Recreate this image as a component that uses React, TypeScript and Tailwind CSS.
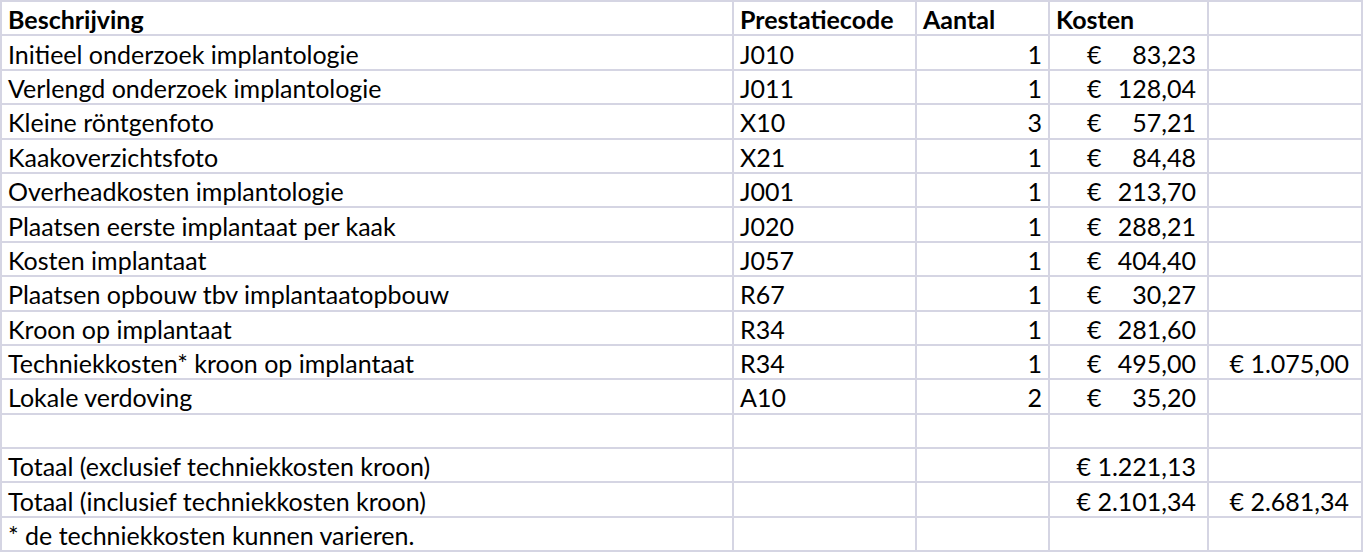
type Row = {
  desc: string;
  code: string;
  qty?: number;
  cost?: string;
  extra?: string;
};

const rows: Row[] = [
  { desc: "Initieel onderzoek implantologie", code: "J010", qty: 1, cost: "83,23" },
  { desc: "Verlengd onderzoek implantologie", code: "J011", qty: 1, cost: "128,04" },
  { desc: "Kleine röntgenfoto", code: "X10", qty: 3, cost: "57,21" },
  { desc: "Kaakoverzichtsfoto", code: "X21", qty: 1, cost: "84,48" },
  { desc: "Overheadkosten implantologie", code: "J001", qty: 1, cost: "213,70" },
  { desc: "Plaatsen eerste implantaat per kaak", code: "J020", qty: 1, cost: "288,21" },
  { desc: "Kosten implantaat", code: "J057", qty: 1, cost: "404,40" },
  { desc: "Plaatsen opbouw tbv implantaatopbouw", code: "R67", qty: 1, cost: "30,27" },
  { desc: "Kroon op implantaat", code: "R34", qty: 1, cost: "281,60" },
  { desc: "Techniekkosten* kroon op implantaat", code: "R34", qty: 1, cost: "495,00", extra: "€ 1.075,00" },
  { desc: "Lokale verdoving", code: "A10", qty: 2, cost: "35,20" },
];

const cell = "bg-white h-[32.4px] flex items-center px-[6px] pt-[3px] whitespace-nowrap";

export default function App() {
  return (
    <div
      className="w-[1363px] bg-white text-black text-[25px] leading-none"
      style={{ fontFamily: "Lato, 'Noto Sans', sans-serif" }}
    >
      <div className="grid grid-cols-[730px_181px_131px_157px_152px] gap-[2px] p-[2px] bg-[#d5d5e3]">
        <div className={`${cell} font-bold`}>Beschrijving</div>
        <div className={`${cell} font-bold`}>Prestatiecode</div>
        <div className={`${cell} font-bold`}>Aantal</div>
        <div className={`${cell} font-bold`}>Kosten</div>
        <div className={cell} />

        {rows.map((r, i) => (
          <RowCells key={i} row={r} />
        ))}

        <div className={cell} />
        <div className={cell} />
        <div className={cell} />
        <div className={cell} />
        <div className={cell} />

        <div className={cell}>Totaal (exclusief techniekkosten kroon)</div>
        <div className={cell} />
        <div className={cell} />
        <div className={`${cell} justify-end pr-[11px]`}>€ 1.221,13</div>
        <div className={cell} />

        <div className={cell}>Totaal (inclusief techniekkosten kroon)</div>
        <div className={cell} />
        <div className={cell} />
        <div className={`${cell} justify-end pr-[11px]`}>€ 2.101,34</div>
        <div className={`${cell} justify-end pr-[12px]`}>€ 2.681,34</div>

        <div className={cell}>* de techniekkosten kunnen varieren.</div>
        <div className={cell} />
        <div className={cell} />
        <div className={cell} />
        <div className={cell} />
      </div>
    </div>
  );
}

function RowCells({ row }: { row: Row }) {
  return (
    <>
      <div className={cell}>{row.desc}</div>
      <div className={cell}>{row.code}</div>
      <div className={`${cell} justify-end`}>{row.qty}</div>
      <div className={`${cell} justify-between pl-[37px] pr-[11px]`}>
        <span>€</span>
        <span>{row.cost}</span>
      </div>
      <div className={`${cell} justify-end pr-[12px]`}>{row.extra}</div>
    </>
  );
}
